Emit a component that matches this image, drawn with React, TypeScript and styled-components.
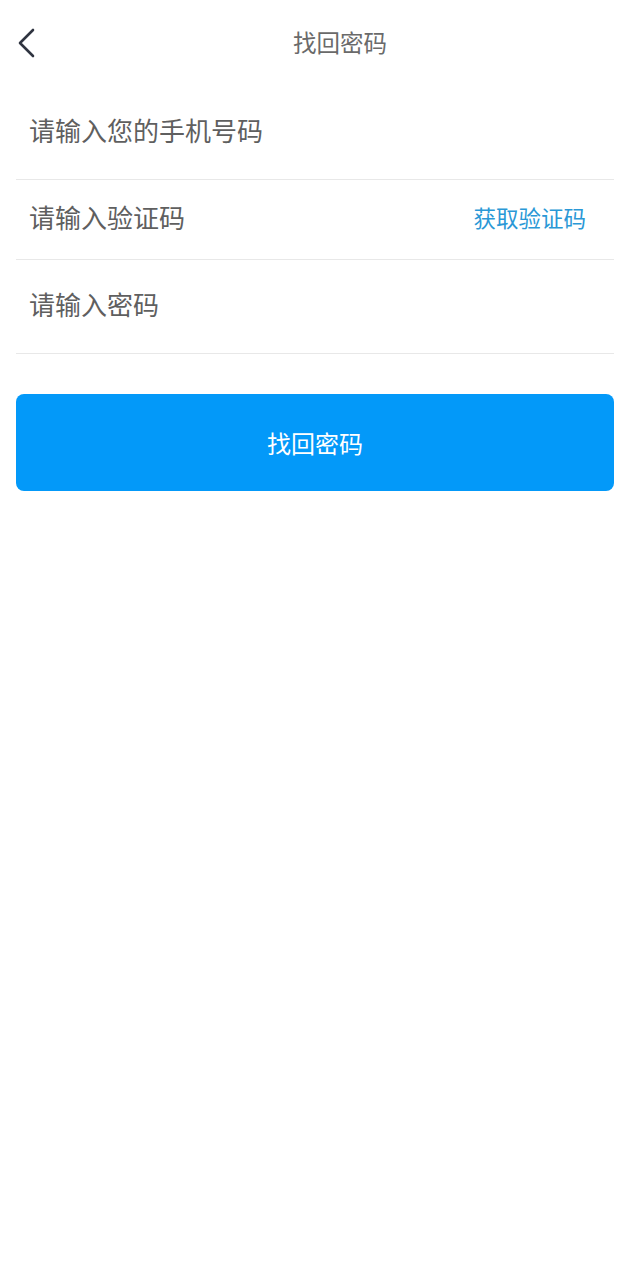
import React from "react";
import styled, { createGlobalStyle } from "styled-components";

const GlobalStyle = createGlobalStyle`
  html, body {
    margin: 0;
    padding: 0;
    background: #ffffff;
    font-family: "Noto Sans CJK SC", "Noto Sans", sans-serif;
  }
  * { box-sizing: border-box; }
`;

const Page = styled.div`
  width: 630px;
  min-height: 1280px;
  background: #ffffff;
  display: flex;
  flex-direction: column;
`;

const Header = styled.header`
  height: 86px;
  display: flex;
  align-items: center;
  padding-left: 14px;
`;

const BackButton = styled.button`
  width: 24px;
  height: 32px;
  padding: 0;
  border: none;
  background: none;
  display: flex;
  align-items: center;
  justify-content: center;
`;

const Title = styled.h1`
  flex: 1;
  margin: 0 2px 0 0;
  padding-left: 14px;
  text-align: center;
  font-size: 23.5px;
  font-weight: 400;
  color: #6a6a6a;
  line-height: 1;
`;

const Form = styled.div`
  display: flex;
  flex-direction: column;
  padding: 0 16px;
`;

const Row = styled.div<{ $h: number }>`
  height: ${(p) => p.$h}px;
  display: flex;
  align-items: center;
  justify-content: space-between;
  border-bottom: 1px solid #e8e8e8;
  padding: 0 28px 5px 13px;
`;

const Placeholder = styled.span`
  font-size: 26px;
  color: #5f5f5f;
  line-height: 1;
`;

const CodeLink = styled.span`
  font-size: 22.5px;
  color: #2a98d6;
  line-height: 1;
`;

const SubmitButton = styled.button`
  margin: 40px 16px 0 16px;
  height: 97px;
  border: none;
  border-radius: 8px;
  background: #0399f9;
  color: #ffffff;
  font-family: "Noto Sans CJK SC", "Noto Sans", sans-serif;
  font-size: 24px;
  font-weight: 400;
  display: flex;
  align-items: center;
  justify-content: center;
`;

export default function App() {
  return (
    <>
      <GlobalStyle />
      <Page>
        <Header>
          <BackButton aria-label="返回">
            <svg width="20" height="30" viewBox="0 0 20 30" fill="none">
              <path
                d="M17 2 L4 15 L17 28"
                stroke="#2f3440"
                strokeWidth="2.6"
                strokeLinecap="round"
                strokeLinejoin="round"
              />
            </svg>
          </BackButton>
          <Title>找回密码</Title>
        </Header>
        <Form>
          <Row $h={94}>
            <Placeholder>请输入您的手机号码</Placeholder>
          </Row>
          <Row $h={80}>
            <Placeholder>请输入验证码</Placeholder>
            <CodeLink>获取验证码</CodeLink>
          </Row>
          <Row $h={94}>
            <Placeholder>请输入密码</Placeholder>
          </Row>
        </Form>
        <SubmitButton>找回密码</SubmitButton>
      </Page>
    </>
  );
}
